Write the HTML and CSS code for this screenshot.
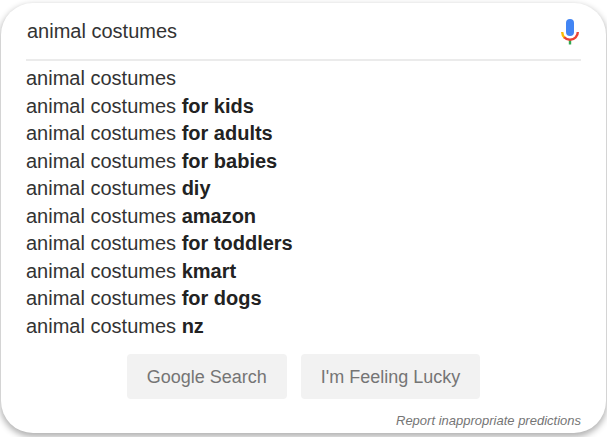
FILE: index.html
```html
<!DOCTYPE html>
<html lang="en">
<head>
<meta charset="utf-8">
<title>animal costumes</title>
<link rel="stylesheet" href="styles.css">
</head>
<body>
<form class="card" role="search">
  <div class="search-row">
    <input class="search-input" type="text" value="animal costumes" aria-label="Search">
    <button class="mic" type="button" aria-label="Search by voice">
      <svg class="mic-icon" viewBox="0 0 20 26" aria-hidden="true">
        <rect x="6" y="0" width="8" height="17" rx="4" fill="#4285f4"/>
        <path d="M8.800 20h2.400v5.500H8.800z" fill="#34a853"/>
        <path d="M2.200 13q0 3.500 2.500 5.800" fill="none" stroke="#fbbc05" stroke-width="2.400"/>
        <path d="M4.200 18.200c3 3.400 8.600 3.400 11.600 0q2-2 2-5.200" fill="none" stroke="#ea4335" stroke-width="2.400"/>
      </svg>
    </button>
  </div>
  <ul class="suggestions">
    <li>animal costumes</li>
    <li>animal costumes <b>for kids</b></li>
    <li>animal costumes <b>for adults</b></li>
    <li>animal costumes <b>for babies</b></li>
    <li>animal costumes <b>diy</b></li>
    <li>animal costumes <b>amazon</b></li>
    <li>animal costumes <b>for toddlers</b></li>
    <li>animal costumes <b>kmart</b></li>
    <li>animal costumes <b>for dogs</b></li>
    <li>animal costumes <b>nz</b></li>
  </ul>
  <div class="actions">
    <button class="action" type="submit">Google Search</button>
    <button class="action" type="button">I'm Feeling Lucky</button>
  </div>
  <a class="report" href="#">Report inappropriate predictions</a>
</form>
</body>
</html>
```
FILE: styles.css
```css
* {
  box-sizing: border-box;
}

body {
  margin: 0;
  padding: 3px 1px 4px;
  background: #fff;
  color: #333;
  font-family: "Liberation Sans", Arial, sans-serif;
  font-size: 20px;
}

.card {
  display: flex;
  flex-direction: column;
  padding: 0 25px 4px;
  border-radius: 32px;
  background: #fff;
  box-shadow: 0 3px 6px 1px rgba(0, 0, 0, 0.3);
}

.search-row {
  display: flex;
  align-items: center;
  height: 58px;
  padding-top: 1px;
  border-bottom: 2px solid #ebebeb;
}

.search-input {
  flex: 1;
  min-width: 0;
  padding: 0 1px;
  border: 0;
  outline: 0;
  background: none;
  color: #333;
  font: inherit;
}

.mic {
  display: flex;
  padding: 1px 1px 0;
  border: 0;
  background: none;
}

.mic-icon {
  width: 20px;
  height: 26px;
}

.suggestions {
  display: grid;
  grid-auto-rows: 1fr;
  align-items: center;
  height: 275px;
  margin: 4px 0 0;
  padding: 0;
  list-style: none;
}

.suggestions b {
  color: #222;
}

.actions {
  display: flex;
  justify-content: center;
  gap: 14px;
  margin-top: 14px;
}

.action {
  height: 45px;
  padding: 2px 20px 0;
  border: 0;
  border-radius: 4px;
  background: #f2f2f2;
  color: #757575;
  font: 18px "Liberation Sans", Arial, sans-serif;
}

.report {
  align-self: flex-end;
  margin-top: 14px;
  color: #757575;
  font-size: 13px;
  font-style: italic;
  line-height: 16px;
  text-decoration: none;
}
```
